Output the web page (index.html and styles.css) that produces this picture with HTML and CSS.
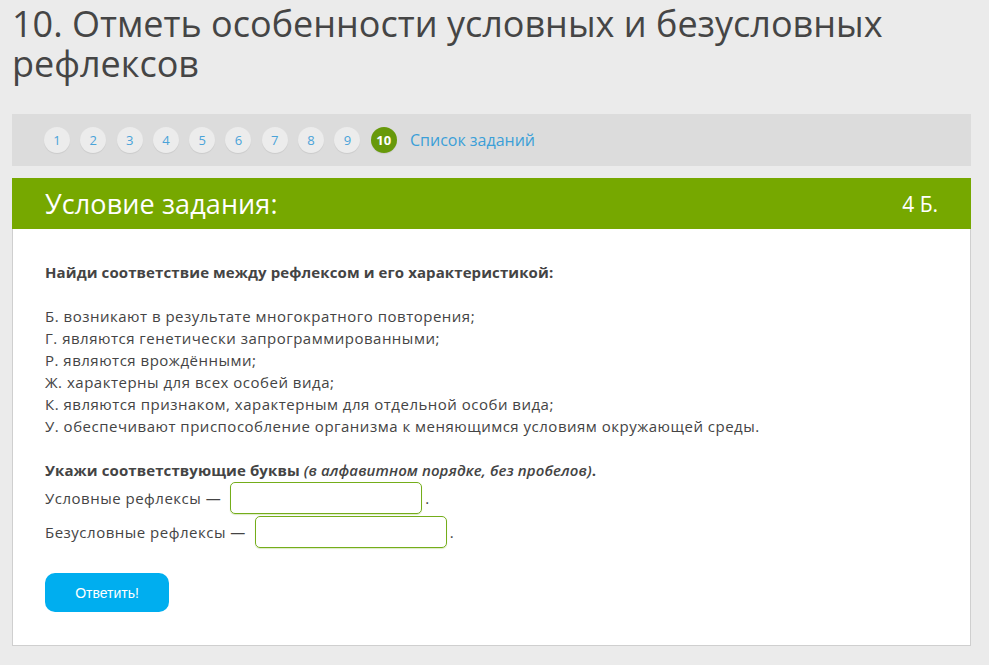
FILE: index.html
```html
<!DOCTYPE html>
<html lang="ru">
<head>
<meta charset="utf-8">
<link rel="stylesheet" href="styles.css">
</head>
<body>
<h1 class="title">10. Отметь особенности условных и безусловных рефлексов</h1>
<nav class="nav">
  <a class="num">1</a><a class="num">2</a><a class="num">3</a><a class="num">4</a><a class="num">5</a><a class="num">6</a><a class="num">7</a><a class="num">8</a><a class="num">9</a><a class="num active">10</a>
  <a class="list">Список заданий</a>
</nav>
<section class="card">
  <header class="card-head">
    <span class="card-title">Условие задания:</span>
    <span class="points">4 Б.</span>
  </header>
  <div class="card-body">
    <p class="bold">Найди соответствие между рефлексом и его характеристикой:</p>
    <p class="items">Б. возникают в результате многократного повторения;<br>Г. являются генетически запрограммированными;<br>Р. являются врождёнными;<br>Ж. характерны для всех особей вида;<br>К. являются признаком, характерным для отдельной особи вида;<br>У. обеспечивают приспособление организма к меняющимся условиям окружающей среды.</p>
    <p class="bold ask">Укажи соответствующие буквы <i>(в алфавитном порядке, без пробелов)</i>.</p>
    <div class="row">Условные рефлексы — <span class="field"></span>.</div>
    <div class="row">Безусловные рефлексы — <span class="field"></span>.</div>
    <button class="btn">Ответить!</button>
  </div>
</section>
</body>
</html>
```
FILE: styles.css
```css
html, body { margin: 0; padding: 0; }
body {
  background: #ebebeb;
  font-family: "Open Sans", "Liberation Sans", sans-serif;
  color: #444;
  padding: 0 18px 0 12px;
}
.title {
  margin: 0;
  padding-top: 4px;
  font-weight: 400;
  font-size: 36px;
  line-height: 40px;
  color: #454545;
  height: 110px;
  box-sizing: border-box;
}
.nav {
  background: #dcdcdc;
  height: 52px;
  display: flex;
  align-items: center;
  padding-left: 32px;
  gap: 10.3px;
  margin-top: 4px;
}
.num {
  width: 26px;
  height: 26px;
  border-radius: 50%;
  background: #ececec;
  box-shadow: 0 1px 1px rgba(0,0,0,0.08);
  color: #4aa3d9;
  font-size: 13px;
  display: flex;
  align-items: center;
  justify-content: center;
}
.num.active {
  background: #67990a;
  color: #fff;
  font-weight: 700;
}
.list {
  color: #3b9fd8;
  font-size: 16px;
  margin-left: 3px;
}
.card {
  margin-top: 12px;
  background: #fff;
  border: 1px solid #cfcfcf;
  border-top: none;
}
.card-head {
  background: #76a800;
  height: 51px;
  display: flex;
  align-items: center;
  justify-content: space-between;
  padding: 0 33px 0 33px;
  color: #fff;
  margin: 0 -1px;
}
.card-title { font-size: 27px; letter-spacing: 0.1px; }
.points { font-size: 21px; }
.card-body {
  padding: 32px 32px 33px 32px;
  font-size: 15px;
  line-height: 22px;
  letter-spacing: 0.5px;
}
.card-body p { margin: 0; }
.bold { font-weight: 700; letter-spacing: 0.1px; }
.bold i { font-weight: 600; }
.items { margin-top: 22px !important; }
.ask { margin-top: 22px !important; }
.row {
  display: flex;
  align-items: center;
  height: 34px;
}
.field {
  display: inline-block;
  width: 190px;
  height: 30px;
  border: 1px solid #74ad1a;
  border-radius: 5px;
  margin: 0 3px 0 9px;
  box-sizing: content-box;
  box-shadow: 0 1px 1px rgba(116,173,26,0.25);
}
.btn {
  margin-top: 24px;
  width: 124px;
  height: 39px;
  background: #00aeef;
  color: #fff;
  border: none;
  border-radius: 10px;
  font-family: "Liberation Sans", Arial, sans-serif;
  font-size: 14px;
  display: block;
}
```
